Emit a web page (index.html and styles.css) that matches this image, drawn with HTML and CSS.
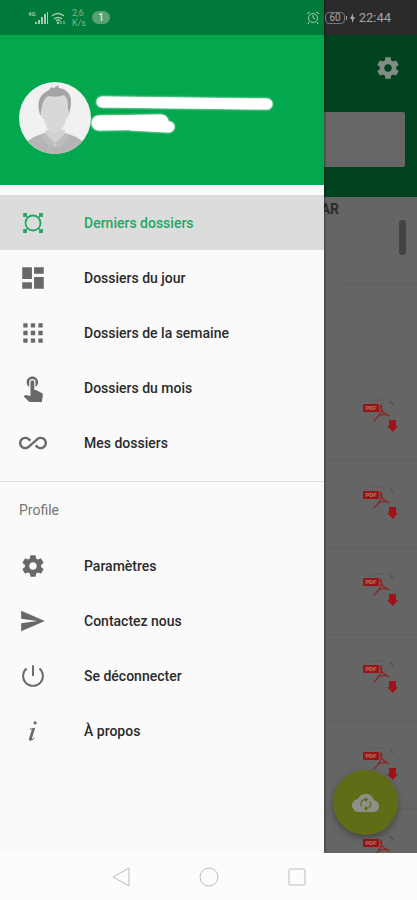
FILE: index.html
```html
<!DOCTYPE html>
<html lang="fr">
<head>
    <meta charset="UTF-8">
    <meta name="viewport" content="width=device-width, initial-scale=1.0">
    <title>Derniers dossiers</title>
    <link rel="stylesheet" href="styles.css">
</head>
<body>

<!-- Shared icons -->
<svg class="sprite" aria-hidden="true">
    <symbol id="gear" viewBox="0 0 24 24">
        <path d="M19.43 12.98c.04-.32.07-.64.07-.98s-.03-.66-.07-.98l2.11-1.65c.19-.15.24-.42.12-.64l-2-3.46c-.12-.22-.39-.3-.61-.22l-2.49 1c-.52-.4-1.08-.73-1.69-.98l-.38-2.65C14.46 2.18 14.25 2 14 2h-4c-.25 0-.46.18-.49.42l-.38 2.65c-.61.25-1.17.59-1.69.98l-2.49-1c-.23-.09-.49 0-.61.22l-2 3.46c-.13.22-.07.49.12.64l2.11 1.65c-.04.32-.07.65-.07.98s.03.66.07.98l-2.11 1.65c-.19.15-.24.42-.12.64l2 3.46c.12.22.39.3.61.22l2.49-1c.52.4 1.08.73 1.69.98l.38 2.65c.03.24.24.42.49.42h4c.25 0 .46-.18.49-.42l.38-2.65c.61-.25 1.17-.59 1.69-.98l2.49 1c.23.09.49 0 .61-.22l2-3.46c.12-.22.07-.49-.12-.64l-2.11-1.65zM12 15.5c-1.93 0-3.5-1.57-3.5-3.5s1.57-3.5 3.5-3.5 3.5 1.57 3.5 3.5-1.57 3.5-3.5 3.5z"/>
    </symbol>
    <symbol id="pdf" viewBox="0 0 36 36">
        <path d="M7 1h14" fill="none" stroke="#5d5d5d"/>
        <path d="M27 2l3 4" fill="none" stroke="#525252" stroke-width="1.5"/>
        <rect x="0" y="5" width="16" height="8" rx="1" fill="#96151a"/>
        <path d="M17 6c2 0 2 3 1 6-1 4-4 7-7 10M17 7c1 5 4 8 10 10M14 18c4-3 8-3 13-1" fill="none" stroke="#8a282c" stroke-width="1.3"/>
        <path d="M26 21h7v6h2l-5 6-6-6h2z" fill="#a01217"/>
    </symbol>
</svg>

<div class="screen">
    <div class="status-bar">
        <svg class="status-signal" viewBox="0 0 40 16" fill="currentColor">
            <text x="0" y="6" class="signal-label">4G</text>
            <rect x="7" y="12" width="2" height="2"/>
            <rect x="10" y="10" width="2" height="4"/>
            <rect x="13" y="7" width="2" height="7"/>
            <rect x="16" y="4" width="2" height="10"/>
            <rect x="19" y="2" width="1" height="12"/>
            <path class="line" d="M24 6q6-5 12 0M26 9q4-3 8 0M28 11q2-2 4 0" stroke-width="1.5"/>
            <circle cx="30" cy="13" r="1.2"/>
            <path class="line" d="M33 11v3M36 11v3"/>
        </svg>
        <span class="status-speed">2,6<br>K/s</span>
        <span class="status-count">1</span>
        <svg class="status-alarm line" viewBox="0 0 14 14">
            <circle cx="7" cy="7" r="4.5"/>
            <path d="M7 4v3l2 1M1 3l3-2M13 3l-3-2M3 11l-1 2M11 11l1 2"/>
        </svg>
        <span class="status-battery">60</span>
        <svg class="status-charge" viewBox="0 0 10 10">
            <path d="M0 3h1v4H0zM7 0L4 6h2v4l3-6H7z"/>
        </svg>
        <span class="status-time">22:44</span>
    </div>

    <main class="app">
        <div class="app-header">
            <button class="settings" type="button" aria-label="Paramètres">
                <svg viewBox="0 0 24 24"><use href="#gear"/></svg>
            </button>
            <div class="search-card"></div>
        </div>
        <div class="summary">
            <strong class="summary-name">AR</strong>
            <span class="scroll-thumb"></span>
        </div>
        <hr class="summary-line">
        <div class="summary-rest"></div>
        <ul class="documents">
            <li><svg viewBox="0 0 36 36"><use href="#pdf"/><text x="8" y="11" class="pdf-label">PDF</text></svg></li>
            <li><svg viewBox="0 0 36 36"><use href="#pdf"/><text x="8" y="11" class="pdf-label">PDF</text></svg></li>
            <li><svg viewBox="0 0 36 36"><use href="#pdf"/><text x="8" y="11" class="pdf-label">PDF</text></svg></li>
            <li><svg viewBox="0 0 36 36"><use href="#pdf"/><text x="8" y="11" class="pdf-label">PDF</text></svg></li>
            <li><svg viewBox="0 0 36 36"><use href="#pdf"/><text x="8" y="11" class="pdf-label">PDF</text></svg></li>
            <li><svg viewBox="0 0 36 36"><use href="#pdf"/><text x="8" y="11" class="pdf-label">PDF</text></svg></li>
        </ul>
        <button class="sync" type="button" aria-label="Synchroniser">
            <svg viewBox="0 0 28 20">
                <path d="M22 7.5A8.5 8.5 0 0 0 6 6 6.5 6.5 0 0 0 7 19h15a5.8 5.8 0 0 0 0-11.5z" fill="#8f8f8a"/>
                <path d="M9.500 13.500A4.500 4.500 0 0 1 13 6.500M18 8.500a4.500 4.500 0 0 1-3.500 7" fill="none" stroke="#5f6a17" stroke-width="1.3"/>
                <path d="M13 4l3.500 2.500L13 9zM15 13l-3.500 2.500L15 18z" fill="#5f6a17"/>
            </svg>
        </button>
    </main>

    <aside class="drawer">
        <div class="profile">
            <svg class="avatar" viewBox="0 0 72 72">
                <defs>
                    <clipPath id="round"><circle cx="36" cy="36" r="36"/></clipPath>
                </defs>
                <g clip-path="url(#round)">
                    <rect width="72" height="72" fill="#f1f1f1"/>
                    <path d="M5 72c0-14 8-17 21-21h20c13 4 21 7 21 21z" fill="#b5b5b5"/>
                    <path d="M27 48h19v5L36 65 26 53z" fill="#d2d2d2"/>
                    <path d="M26 51l10 10-5 5-9-13zM47 51L36 61l5 5 10-13z" fill="#bdbdbd"/>
                    <path d="M21 33c-4-14 0-21 9-25l2-3 3 1 4-3 1 3c8 1 12 7 12 13 0 6-1 9-2 14z" fill="#a5a5a5"/>
                    <path d="M23 25c1-7 4-11 8-11 5 1 9 1 14-1 4 4 4 8 4 14l1 3c0 4-1 6-3 7-2 9-6 14-11 14s-9-5-11-14c-2-1-4-4-3-8z" fill="#d8d8d8"/>
                </g>
            </svg>
            <!-- Name and address are masked -->
            <svg class="masked" viewBox="0 0 186 44">
                <path d="M11 6l78 1 87 1" stroke-width="11"/>
                <path d="M8 27l62-1" stroke-width="15"/>
                <path d="M40 29l38 2" stroke-width="11"/>
            </svg>
        </div>

        <nav>
            <ul class="menu">
                <li><a class="active" href="#">
                    <svg class="line" viewBox="-1 -1 28 28" stroke-width="1.8">
                        <circle cx="13" cy="13" r="7.5"/>
                        <path d="M4 7V4h3M19 4h3v3M22 19v3h-3M7 22H4v-3M4 4l3 3M22 4l-3 3M22 22l-3-3M4 22l3-3"/>
                    </svg>
                    Derniers dossiers
                </a></li>
                <li><a href="#">
                    <svg viewBox="-1 -1 26 26"><path d="M2 2h9v11H2zM13 2h9v6h-9zM13 11h9v11h-9zM2 16h9v6H2z"/></svg>
                    Dossiers du jour
                </a></li>
                <li><a href="#">
                    <svg viewBox="-1 -1 26 26"><path d="M3 3h4v4H3zM10 3h4v4h-4zM17 3h4v4h-4zM3 10h4v4H3zM10 10h4v4h-4zM17 10h4v4h-4zM3 17h4v4H3zM10 17h4v4h-4zM17 17h4v4h-4z"/></svg>
                    Dossiers de la semaine
                </a></li>
                <li><a href="#">
                    <svg viewBox="1 1 22 22"><path d="M9 11.24V7.5a2.5 2.5 0 0 1 5 0v3.74c1.21-.81 2-2.18 2-3.74C16 5.01 13.99 3 11.5 3S7 5.01 7 7.5c0 1.56.79 2.93 2 3.74zm9.84 4.63l-4.54-2.26c-.17-.07-.35-.11-.54-.11H13v-6a1.5 1.5 0 0 0-3 0v10.74l-3.43-.72c-.08-.01-.15-.03-.24-.03-.31 0-.59.13-.79.33l-.79.8 4.94 4.94c.27.27.65.44 1.06.44h6.79c.75 0 1.33-.55 1.44-1.28l.75-5.27c.01-.07.02-.14.02-.2 0-.62-.38-1.16-.91-1.38z"/></svg>
                    Dossiers du mois
                </a></li>
                <li><a href="#">
                    <svg viewBox="0 0 24 24"><path d="M18.6 6.62c-1.44 0-2.8.56-3.77 1.53L12 10.66 10.48 12h.01L7.8 14.39c-.64.64-1.49.99-2.4.99-1.87 0-3.39-1.51-3.39-3.38S3.53 8.62 5.4 8.62c.91 0 1.76.35 2.44 1.03l1.13 1 1.51-1.34L9.22 8.2C8.2 7.18 6.84 6.62 5.4 6.62 2.42 6.62 0 9.04 0 12s2.42 5.38 5.4 5.38c1.44 0 2.8-.56 3.77-1.53l2.83-2.5.01.01L13.52 12h-.01l2.69-2.39c.64-.64 1.49-.99 2.4-.99 1.87 0 3.39 1.51 3.39 3.38s-1.52 3.38-3.39 3.38c-.9 0-1.76-.35-2.44-1.03l-1.14-1.01-1.51 1.34 1.27 1.12c1.02 1.01 2.37 1.57 3.82 1.57 2.98 0 5.4-2.41 5.4-5.38s-2.42-5.37-5.4-5.37z"/></svg>
                    Mes dossiers
                </a></li>
            </ul>

            <h2 class="menu-title">Profile</h2>
            <ul class="menu second">
                <li><a href="#">
                    <svg viewBox="-1 -1 26 26"><use href="#gear" width="24" height="24"/></svg>
                    Paramètres
                </a></li>
                <li><a href="#">
                    <svg viewBox="-1 -1 26 26"><path d="M1 21.500l22-9.500L1 2.500v7.500l15 2-15 2z"/></svg>
                    Contactez nous
                </a></li>
                <li><a href="#">
                    <svg class="line" viewBox="-1 -1 26 26" stroke-width="1.8"><path d="M12 2v10M6 5a9.200 9.200 0 1 0 12 0"/></svg>
                    Se déconnecter
                </a></li>
                <li><a href="#">
                    <svg viewBox="-1 -1 26 26"><path d="M14 3a1.500 1.500 0 1 1-.1 0zM9 10l5-1-3 10c0 1 1 0 2-1l.5.5C12 20.500 10.500 21 9.500 21 8 21 8 20 8.500 18.500L11 10.500H9z"/></svg>
                    À propos
                </a></li>
            </ul>
        </nav>
    </aside>
</div>

<div class="nav-bar">
    <button type="button" aria-label="Retour">
        <svg class="line" viewBox="0 0 20 20"><path d="M18 1v18L2 10z"/></svg>
    </button>
    <button type="button" aria-label="Accueil">
        <svg class="line" viewBox="0 0 20 20"><circle cx="10" cy="10" r="9"/></svg>
    </button>
    <button type="button" aria-label="Applications">
        <svg class="line" viewBox="0 0 20 20"><rect x="2" y="2" width="16" height="16" rx="1"/></svg>
    </button>
</div>

</body>
</html>
```

FILE: styles.css
```css
* {
    box-sizing: border-box;
}
body {
    display: flex;
    flex-direction: column;
    height: 100vh;
    margin: 0;
    font-family: Roboto, "Noto Sans", sans-serif;
    background-color: #fcfcfc;
    color: #2b2b2b;
}
ul {
    list-style: none;
    margin: 0;
    padding: 0;
}
button {
    padding: 0;
    border: none;
    background: none;
    color: inherit;
}
svg {
    display: block;
    fill: currentColor;
}
.line {
    fill: none;
    stroke: currentColor;
}
.sprite {
    position: absolute;
    width: 0;
    height: 0;
}
.screen {
    position: relative;
    flex: 1;
    min-height: 0;
    overflow: hidden;
}

/* Status bar, drawn over the drawer and the page */
.status-bar {
    position: absolute;
    top: 0;
    left: 0;
    right: 0;
    z-index: 3;
    display: flex;
    align-items: center;
    height: 35px;
    padding: 0 26px 0 28px;
    color: #a9c9b5;
}
.status-signal {
    width: 40px;
    height: 16px;
}
.signal-label {
    font-size: 6px;
    font-weight: bold;
}
.status-speed {
    margin-left: 4px;
    color: #7fb592;
    font-size: 9px;
    line-height: 10px;
}
.status-count {
    width: 18px;
    margin-left: 6px;
    border-radius: 7px;
    background-color: #5aa172;
    color: #e3f3e8;
    font-size: 11px;
    line-height: 13px;
    text-align: center;
}
.status-alarm {
    width: 14px;
    height: 14px;
    margin-left: auto;
}
.status-battery {
    margin-left: 5px;
    padding: 0 3px;
    border: 1px solid #777;
    border-radius: 4px;
    color: #a5a5a5;
    font-size: 10px;
    line-height: 10px;
}
.status-charge {
    width: 10px;
    height: 10px;
    margin: 0 3px 0 1px;
    color: #a5a5a5;
}
.status-time {
    color: #a5a5a5;
    font-size: 13px;
    line-height: 16px;
}

/* Dimmed page behind the drawer */
.app {
    height: 100%;
    padding-top: 35px;
    background: linear-gradient(#2b2b2b 35px, #656565 35px);
}
.app-header {
    height: 162px;
    padding: 20px 12px 0;
    background-color: #00431e;
}
.settings {
    display: block;
    margin: 0 4px 0 auto;
    color: #828b84;
}
.settings svg {
    width: 26px;
    height: 26px;
}
.search-card {
    height: 55px;
    margin-top: 31px;
    border-radius: 2px;
    background-color: #666;
}
.summary {
    display: flex;
    justify-content: flex-end;
    gap: 60px;
    height: 87px;
    padding: 4px 11px 0 0;
}
.summary-name {
    color: #2c2c2c;
    font-size: 14px;
    line-height: 16px;
}
.scroll-thumb {
    width: 7px;
    height: 35px;
    margin-top: 19px;
    border-radius: 3px;
    background-color: #434343;
}
.summary-line {
    width: 77px;
    margin: 0 0 0 auto;
    border: none;
    border-top: 1px solid #5c5c5c;
}
.summary-rest {
    height: 89px;
}
.documents li {
    display: flex;
    align-items: center;
    justify-content: flex-end;
    height: 87px;
    padding-right: 18px;
    border-bottom: 1px solid #5f5f5f;
}
.documents svg {
    width: 36px;
    height: 36px;
}
.pdf-label {
    fill: #b87478;
    font-size: 6px;
    font-weight: bold;
    text-anchor: middle;
}
.sync {
    position: absolute;
    right: 19px;
    bottom: 18px;
    display: flex;
    align-items: center;
    justify-content: center;
    width: 65px;
    height: 65px;
    border-radius: 50%;
    background-color: #616c16;
    box-shadow: 0 3px 6px rgba(0, 0, 0, 0.3);
}
.sync svg {
    width: 28px;
    height: 20px;
}

/* Drawer */
.drawer {
    position: absolute;
    top: 0;
    bottom: 0;
    left: 0;
    right: 93px;
    z-index: 2;
    background-color: #fafafa;
    box-shadow: 1px 0 2px rgba(0, 0, 0, 0.4);
}
.profile {
    display: flex;
    align-items: center;
    height: 185px;
    padding: 50px 19px 0;
    background: linear-gradient(#007a38 35px, #03a84e 35px);
}
.avatar {
    flex: none;
    width: 72px;
    height: 72px;
}
.masked {
    width: 186px;
    height: 44px;
    overflow: visible;
    fill: none;
    stroke: #fff;
    stroke-linecap: round;
    filter: drop-shadow(0 0 1px #fff);
}
.menu {
    padding: 10px 0 11px;
}
.menu a {
    display: flex;
    align-items: center;
    gap: 37px;
    height: 55px;
    padding: 0 19px;
    color: #2b2b2b;
    font-size: 14px;
    font-weight: 500;
    text-decoration: none;
}
.menu svg {
    width: 28px;
    height: 28px;
    color: #696969;
}
.menu .active {
    background-color: #dcdcdc;
    color: #22a862;
}
.menu .active svg {
    color: #22a862;
}
.menu-title {
    margin: 0;
    padding: 0 19px;
    border-top: 1px solid #dedede;
    color: #757575;
    font-size: 14px;
    font-weight: 400;
    line-height: 56px;
}
.second {
    padding: 0;
}

/* Android buttons */
.nav-bar {
    display: flex;
    align-items: center;
    justify-content: center;
    gap: 68px;
    height: 47px;
    background-color: #fcfcfc;
    color: #bbb;
}
.nav-bar svg {
    width: 20px;
    height: 20px;
}
```
